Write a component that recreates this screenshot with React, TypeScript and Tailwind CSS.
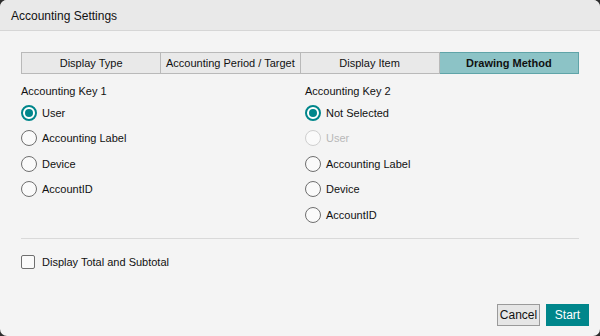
import React from "react";

function Radio({ checked, disabled, label }: { checked?: boolean; disabled?: boolean; label: string }) {
  return (
    <div className="flex items-center h-[25.5px]">
      {checked ? (
        <span className="w-4 h-4 rounded-full border-2 border-[#00868b] bg-white flex items-center justify-center">
          <span className="w-[8px] h-[8px] rounded-full bg-[#00868b]" />
        </span>
      ) : (
        <span
          className={
            "w-4 h-4 rounded-full border-[1.5px] bg-[#fafafa] " +
            (disabled ? "border-[#cfcfcf]" : "border-[#6f6f6f]")
          }
        />
      )}
      <span className={"ml-[5px] " + (disabled ? "text-[#b8b8b8]" : "text-[#111]")}>{label}</span>
    </div>
  );
}

export default function App() {
  const tabs = ["Display Type", "Accounting Period / Target", "Display Item", "Drawing Method"];
  return (
    <div
      className="w-[600px] h-[336px] bg-[#2e2e2e] text-[11px]"
      style={{ fontFamily: '"Liberation Sans", Arial, sans-serif' }}
    >
      <div className="w-full h-full rounded-[7px] overflow-hidden bg-[#f4f4f4] flex flex-col">
        <div className="h-[31px] bg-[#e9e9e9] border-b border-[#d6d6d6] flex items-center pt-[1px] px-[11px] text-[12px] text-[#111]">
          Accounting Settings
        </div>
        <div className="flex-1 flex flex-col px-[21px] pt-[21px]">
          <div className="flex h-[22px]">
            {tabs.map((t, i) => (
              <div
                key={t}
                className={
                  "flex-1 flex items-center justify-center border " +
                  (i === 3
                    ? "bg-[#8cc3c6] border-[#5fa4a8] font-bold text-[#111]"
                    : "bg-[#e9e9e9] border-[#b9b9b9] text-[#111]") +
                  (i > 0 ? " border-l-0" : "")
                }
              >
                {t}
              </div>
            ))}
          </div>
          <div className="flex mt-[8px]">
            <div className="w-[284px] flex flex-col">
              <div className="h-[18px] flex items-center text-[#111]">Accounting Key 1</div>
              <Radio checked label="User" />
              <Radio label="Accounting Label" />
              <Radio label="Device" />
              <Radio label="AccountID" />
            </div>
            <div className="flex-1 flex flex-col">
              <div className="h-[18px] flex items-center text-[#111]">Accounting Key 2</div>
              <Radio checked label="Not Selected" />
              <Radio disabled label="User" />
              <Radio label="Accounting Label" />
              <Radio label="Device" />
              <Radio label="AccountID" />
            </div>
          </div>
          <div className="mt-[10px] border-t border-[#d9d9d9]" />
          <div className="flex items-center mt-[15px]">
            <span className="w-[14px] h-[14px] border-[1.5px] border-[#6f6f6f] bg-[#fafafa] rounded-[2px]" />
            <span className="ml-[7px] text-[#111]">Display Total and Subtotal</span>
          </div>
          <div className="flex-1" />
        </div>
        <div className="flex justify-end gap-[6px] pr-[11px] pb-[10px]">
          <button className="w-[43px] h-[22px] bg-[#e6e6e6] border border-[#9a9a9a] text-[12px] text-[#111]">
            Cancel
          </button>
          <button className="w-[43px] h-[22px] bg-[#00868b] text-white text-[12px]">Start</button>
        </div>
      </div>
    </div>
  );
}
